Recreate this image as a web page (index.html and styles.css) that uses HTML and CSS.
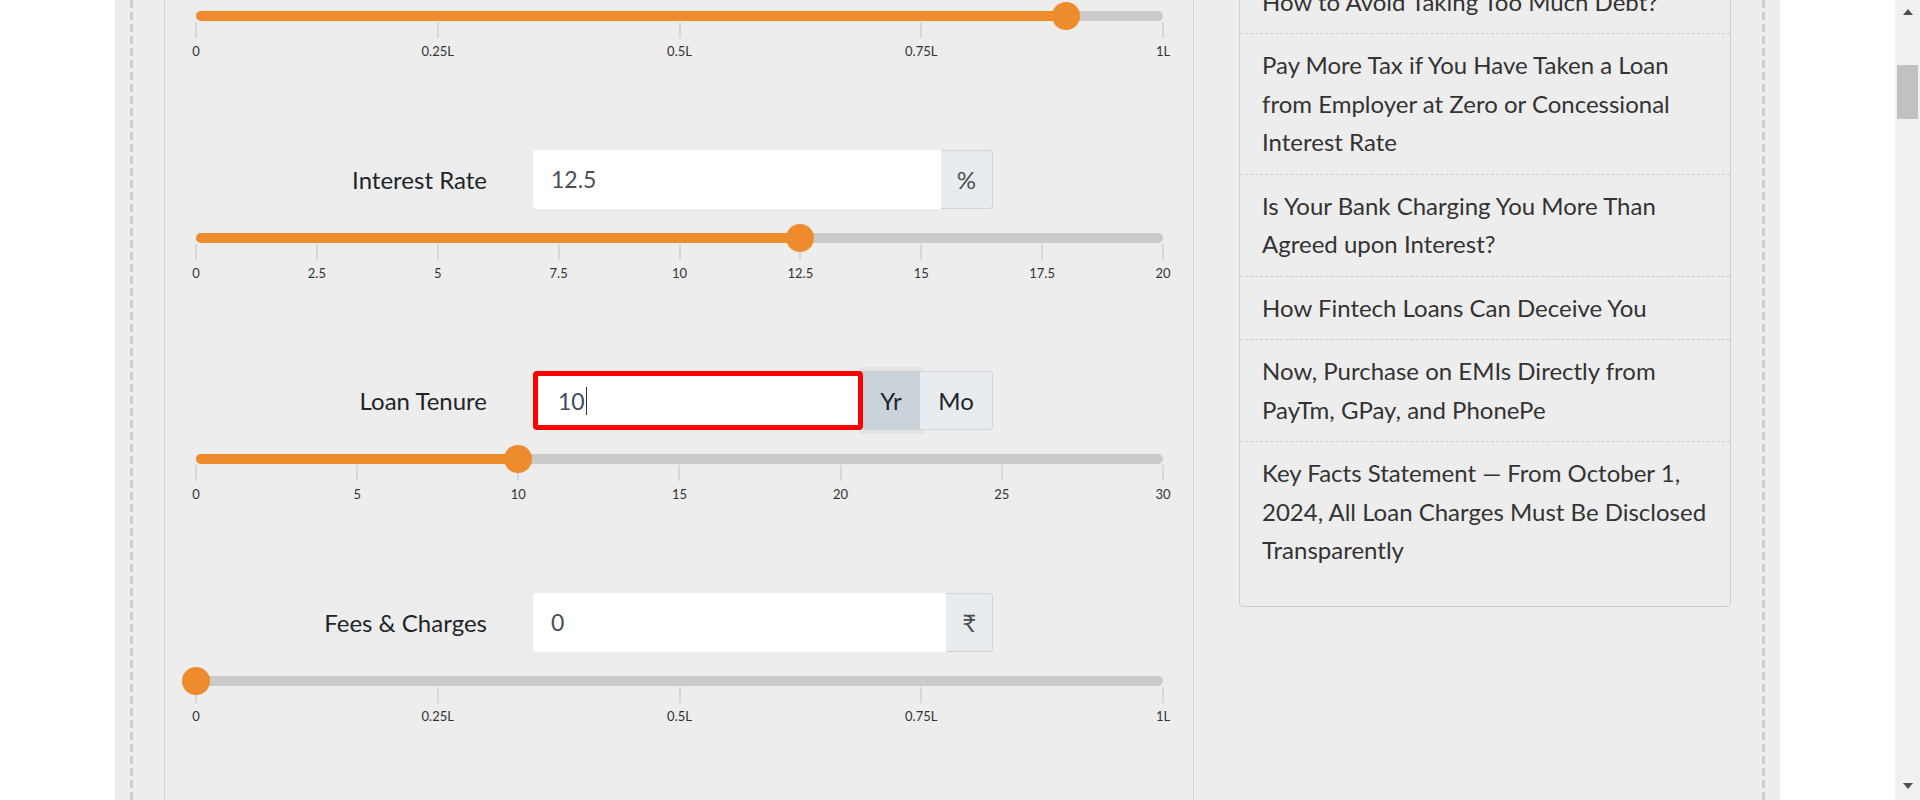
FILE: index.html
```html
<!DOCTYPE html>
<html lang="en">
<head>
<meta charset="utf-8">
<title>Loan EMI Calculator</title>
<link rel="stylesheet" href="styles.css">
</head>
<body>
<div class="screen">
  <main class="page">
    <div class="wrap">
      <div class="rule"></div>
      <div class="content">
        <section class="calc">
          <div class="calc-row">
            <div class="field-line">
              <label class="field-label">Loan Amount</label>
              <div class="input-group">
                <div class="input">90,000</div>
                <span class="addon">₹</span>
              </div>
            </div>
            <div class="slider">
              <div class="fill" style="width:90%"></div>
              <div class="thumb" style="left:90%"></div>
            </div>
            <div class="ticks">
              <div class="tick"><span>0</span></div>
              <div class="tick"><span>0.25L</span></div>
              <div class="tick"><span>0.5L</span></div>
              <div class="tick"><span>0.75L</span></div>
              <div class="tick"><span>1L</span></div>
            </div>
          </div>

          <div class="calc-row">
            <div class="field-line">
              <label class="field-label">Interest Rate</label>
              <div class="input-group">
                <div class="input">12.5</div>
                <span class="addon">%</span>
              </div>
            </div>
            <div class="slider">
              <div class="fill" style="width:62.5%"></div>
              <div class="thumb" style="left:62.5%"></div>
            </div>
            <div class="ticks">
              <div class="tick"><span>0</span></div>
              <div class="tick"><span>2.5</span></div>
              <div class="tick"><span>5</span></div>
              <div class="tick"><span>7.5</span></div>
              <div class="tick"><span>10</span></div>
              <div class="tick"><span>12.5</span></div>
              <div class="tick"><span>15</span></div>
              <div class="tick"><span>17.5</span></div>
              <div class="tick"><span>20</span></div>
            </div>
          </div>

          <div class="calc-row">
            <div class="field-line">
              <label class="field-label">Loan Tenure</label>
              <div class="input-group">
                <div class="input is-focused">10<span class="caret"></span></div>
                <span class="addon toggle is-active">Yr</span>
                <span class="addon toggle">Mo</span>
              </div>
            </div>
            <div class="slider">
              <div class="fill" style="width:33.3333%"></div>
              <div class="thumb" style="left:33.3333%"></div>
            </div>
            <div class="ticks">
              <div class="tick"><span>0</span></div>
              <div class="tick"><span>5</span></div>
              <div class="tick"><span>10</span></div>
              <div class="tick"><span>15</span></div>
              <div class="tick"><span>20</span></div>
              <div class="tick"><span>25</span></div>
              <div class="tick"><span>30</span></div>
            </div>
          </div>

          <div class="calc-row">
            <div class="field-line">
              <label class="field-label">Fees &amp; Charges</label>
              <div class="input-group">
                <div class="input">0</div>
                <span class="addon">₹</span>
              </div>
            </div>
            <div class="slider">
              <div class="fill" style="width:0%"></div>
              <div class="thumb" style="left:0%"></div>
            </div>
            <div class="ticks">
              <div class="tick"><span>0</span></div>
              <div class="tick"><span>0.25L</span></div>
              <div class="tick"><span>0.5L</span></div>
              <div class="tick"><span>0.75L</span></div>
              <div class="tick"><span>1L</span></div>
            </div>
          </div>
        </section>

        <aside class="sidebar">
          <ul class="articles">
            <li>How to Avoid Taking Too Much Debt?</li>
            <li>Pay More Tax if You Have Taken a Loan from Employer at Zero or Concessional Interest Rate</li>
            <li>Is Your Bank Charging You More Than Agreed upon Interest?</li>
            <li>How Fintech Loans Can Deceive You</li>
            <li>Now, Purchase on EMIs Directly from PayTm, GPay, and PhonePe</li>
            <li>Key Facts Statement — From October 1, 2024, All Loan Charges Must Be Disclosed Transparently</li>
          </ul>
        </aside>
      </div>
      <div class="rule"></div>
    </div>
  </main>
  <div class="scrollbar">
    <span class="sb-arrow sb-up"></span>
    <span class="sb-thumb"></span>
    <span class="sb-space"></span>
    <span class="sb-arrow sb-down"></span>
  </div>
</div>
</body>
</html>
```

FILE: styles.css
```css
* { box-sizing: border-box; }

html, body {
  margin: 0;
  padding: 0;
  height: 800px;
  overflow: hidden;
  background: #ffffff;
  font-family: Lato, "Noto Sans", "DejaVu Sans", sans-serif;
}

.screen {
  display: flex;
  height: 800px;
  overflow: hidden;
}

.page {
  flex: 1;
  padding: 0 115px;
  height: 800px;
  overflow: hidden;
  background: #ffffff;
}

.wrap {
  display: flex;
  height: 100%;
  padding: 0 15px;
  background: #ededed;
}

.rule {
  flex: none;
  width: 3px;
  background: repeating-linear-gradient(to bottom, #cecece 0 8px, transparent 8px 12px);
}

.content {
  flex: 1;
  display: flex;
  align-items: flex-start;
  gap: 45px;
  padding: 0 31px;
  margin-top: -72px;
}

/* ---------- calculator ---------- */
.calc {
  flex: none;
  width: 1030px;
  border-left: 1px solid #d2d2d2;
  border-right: 1px solid #d2d2d2;
  padding: 0 30px 0 31px;
}

.calc-row {
  margin-bottom: 90.5px;
}

.field-line {
  display: grid;
  grid-template-columns: 291px 460px;
  column-gap: 46px;
  align-items: center;
  height: 59px;
}

.field-label {
  text-align: right;
  font-size: 24px;
  color: #212529;
}

.input-group {
  display: flex;
  height: 59px;
}

.input {
  flex: 1;
  display: flex;
  align-items: center;
  padding: 0 18px;
  background: #ffffff;
  border-radius: 4px 0 0 4px;
  font-size: 23px;
  color: #495057;
}

.input.is-focused {
  position: relative;
  z-index: 1;
  border: 5.5px solid #ff0000;
  border-radius: 4px;
  padding-left: 20px;
  color: #3d4b5c;
}

.caret {
  display: inline-block;
  width: 1px;
  height: 28px;
  margin-left: 1px;
  background: #333333;
}

.addon {
  flex: none;
  display: flex;
  align-items: center;
  justify-content: center;
  padding: 0 16px;
  background: #e9ecef;
  border: 1px solid #ced4da;
  border-left: 0;
  border-radius: 0 4px 4px 0;
  font-size: 24px;
  color: #495057;
}

.addon.toggle {
  width: 73px;
  padding: 0;
  color: #212529;
}

.addon.toggle.is-active {
  width: 57px;
  border-radius: 0;
  background: #cbd3da;
  border-color: #cbd3da;
  box-shadow: 0 0 0 4px #e3e3e3;
}

/* ---------- slider ---------- */
.slider {
  position: relative;
  height: 10px;
  margin-top: 24px;
  border-radius: 5px;
  background: #cacaca;
}

.fill {
  height: 100%;
  border-radius: 5px;
  background: #ee8c2d;
}

.thumb {
  position: absolute;
  top: 50%;
  width: 28px;
  height: 28px;
  border-radius: 50%;
  background: #ee8c2d;
  transform: translate(-50%, -50%);
}

.ticks {
  display: flex;
  justify-content: space-between;
  margin-top: 1px;
}

.tick {
  width: 0;
  display: flex;
  flex-direction: column;
  align-items: center;
}

.tick::before {
  content: "";
  width: 2px;
  height: 16px;
  background: #d6d8dc;
}

.tick span {
  margin-top: 5px;
  font-size: 13px;
  line-height: 16px;
  color: #333333;
  white-space: nowrap;
}

/* ---------- sidebar ---------- */
.sidebar {
  flex: none;
  width: 492px;
  border: 1px solid #cfcfcf;
  border-radius: 4px;
  padding: 41.5px 0 24px;
}

.articles {
  list-style: none;
  margin: 0;
  padding: 0;
}

.articles li {
  padding: 12px 20px 12px 22px;
  font-size: 24px;
  line-height: 38.5px;
  color: #333333;
  border-bottom: 1px dashed #cccccc;
}

.articles li:last-child {
  border-bottom: 0;
}

/* ---------- scrollbar ---------- */
.scrollbar {
  flex: none;
  width: 25px;
  height: 800px;
  display: flex;
  flex-direction: column;
  align-items: center;
  background: #f1f1f1;
}

.sb-arrow {
  width: 0;
  height: 0;
  border-left: 5.5px solid transparent;
  border-right: 5.5px solid transparent;
}

.sb-up {
  margin-top: 9px;
  border-bottom: 6px solid #505050;
}

.sb-thumb {
  width: 21px;
  height: 54px;
  margin-top: 50px;
  background: #c1c1c1;
}

.sb-space {
  flex: 1;
}

.sb-down {
  margin-bottom: 11px;
  border-top: 6px solid #505050;
}
```
